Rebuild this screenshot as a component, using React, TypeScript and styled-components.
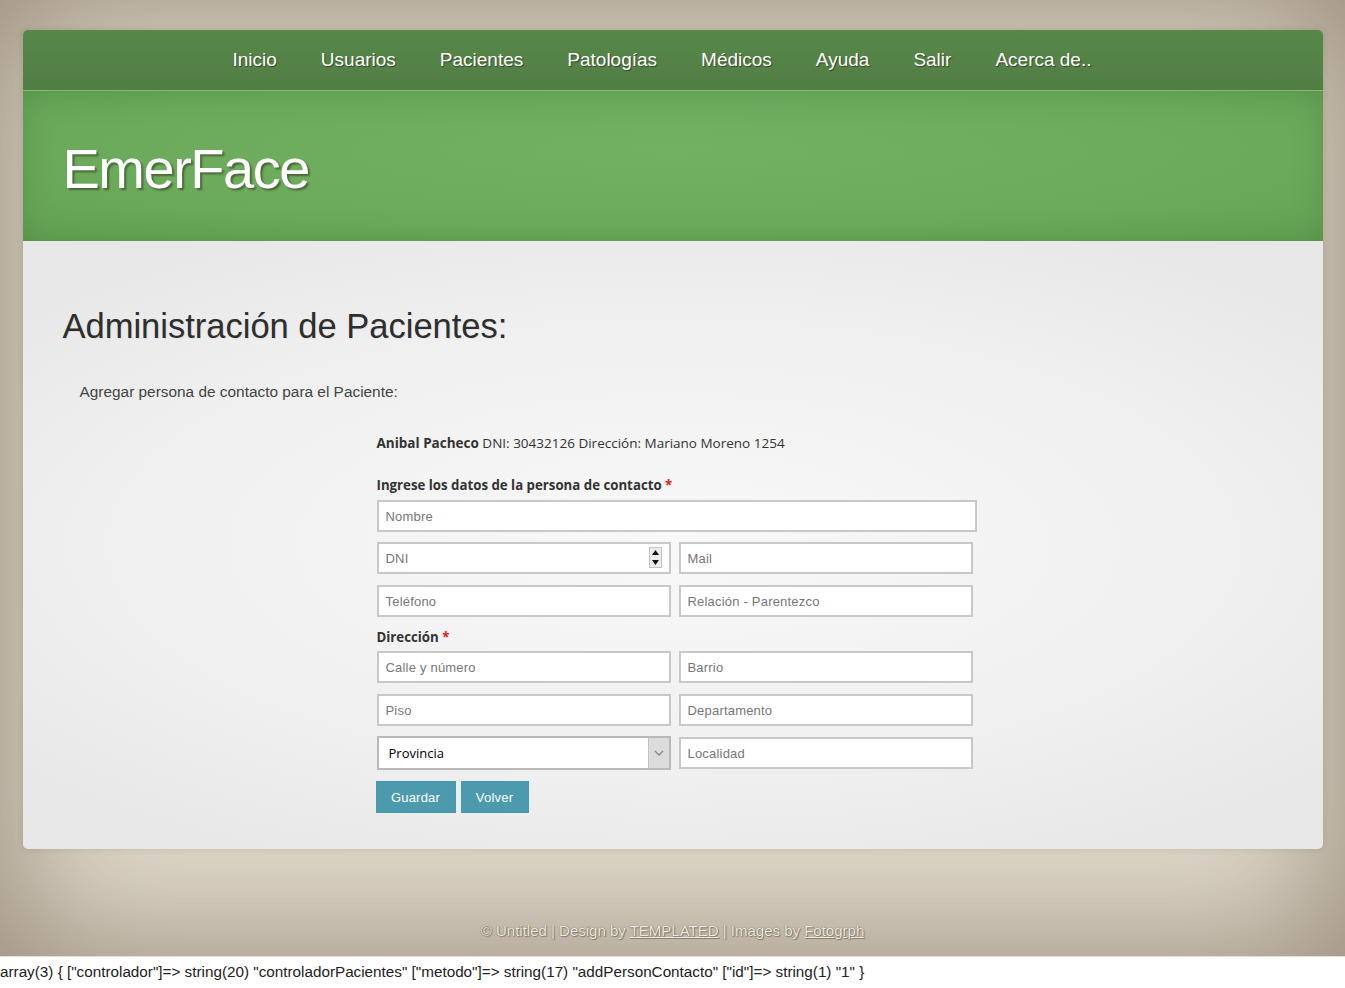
import React from "react";
import styled, { createGlobalStyle } from "styled-components";

const GlobalStyle = createGlobalStyle`
  html, body { margin: 0; padding: 0; background: #ffffff; }
  body { font-family: "Liberation Sans", Arial, sans-serif; }
  * { box-sizing: border-box; }
`;

const Page = styled.div`
  height: 957px;
  padding-top: 30px;
  background: #e0d9cb;
  box-shadow: inset 0 0 140px 10px rgba(95, 78, 58, 0.55);
  border-bottom: 1px solid #e4ded4;
`;

const Wrapper = styled.div`
  width: 1300px;
  margin: 0 auto;
  border-radius: 5px;
  box-shadow: 0 0 6px rgba(60, 45, 30, 0.15);
`;

const Nav = styled.nav`
  height: 60px;
  border-radius: 5px 5px 0 0;
  background: linear-gradient(#578848, #527d45);
  display: flex;
  justify-content: center;
  padding-right: 21px;
`;

const NavList = styled.ul`
  list-style: none;
  margin: 0;
  padding: 0;
  display: flex;
  gap: 44px;
`;

const NavLink = styled.a`
  display: block;
  font-family: "Liberation Sans", Arial, sans-serif;
  font-size: 19px;
  line-height: 60px;
  color: #ffffff;
  text-decoration: none;
  text-shadow: 1px 1px 1px rgba(0, 0, 0, 0.45);
`;

const Header = styled.header`
  height: 151px;
  border-top: 1px solid #80bd6f;
  background: radial-gradient(ellipse at 50% 40%, #72b062 0%, #6dab5c 60%, #64a253 100%);
  box-shadow: inset 0 0 30px rgba(45, 90, 35, 0.25);
  padding: 6px 40px 0;
`;

const Logo = styled.h1`
  margin: 0;
  font-family: "Liberation Sans", Arial, sans-serif;
  font-weight: normal;
  font-size: 56px;
  letter-spacing: -1.5px;
  line-height: 144px;
  color: #ffffff;
  text-shadow: 2px 2px 2px rgba(40, 50, 20, 0.55);
`;

const Content = styled.main`
  height: 608px;
  border-radius: 0 0 5px 5px;
  background: radial-gradient(ellipse 70% 60% at 50% 50%, #f8f8f8 0%, #f0f0f0 60%, #e7e7e7 100%);
  padding: 65px 40px 0;
`;

const Title = styled.h2`
  margin: 0;
  font-family: "Liberation Sans", Arial, sans-serif;
  font-weight: normal;
  font-size: 34.5px;
  line-height: 40px;
  color: #2e2e2e;
  text-shadow: 1px 1px 0 rgba(0, 0, 0, 0.08);
`;

const Intro = styled.p`
  margin: 36px 0 0 17px;
  font-family: "Liberation Sans", Arial, sans-serif;
  font-size: 15.4px;
  line-height: 20px;
  color: #444444;
`;

const Form = styled.form`
  width: 600px;
  margin: 32px 0 0 314px;
  display: flex;
  flex-direction: column;
  font-family: "Open Sans", "Noto Sans", sans-serif;
  font-size: 13px;
  color: #333333;
`;

const Info = styled.div`
  font-size: 13.5px;
  line-height: 18px;
  strong { font-weight: 700; }
`;

const Label = styled.div<{ $top: number; $bottom: number }>`
  margin-top: ${(p) => p.$top}px;
  margin-bottom: ${(p) => p.$bottom}px;
  font-size: 13.25px;
  line-height: 18px;
  font-weight: 700;
  color: #333333;
`;

const Star = styled.span`
  color: #e11b1b;
`;

const Row = styled.div<{ $gap?: number }>`
  display: grid;
  grid-template-columns: 294px 294px;
  column-gap: 8px;
  align-items: center;
  margin-bottom: ${(p) => p.$gap ?? 10}px;
`;

const Field = styled.div`
  position: relative;
`;

const Input = styled.input<{ $wide?: boolean }>`
  display: block;
  width: ${(p) => (p.$wide ? "600px" : "100%")};
  height: 32px;
  border: 2px solid #c8c8c8;
  background: #ffffff;
  padding: 0 7px;
  font-family: "Liberation Sans", Arial, sans-serif;
  font-size: 13px;
  letter-spacing: 0.2px;
  color: #555555;
  outline: none;
  &::placeholder { color: #777777; }
`;

const Spinner = styled.div`
  position: absolute;
  right: 9px;
  top: 5px;
  width: 13px;
  height: 21px;
  border: 1px solid #c4c4c4;
  background: #ececec;
  display: flex;
  flex-direction: column;
  align-items: center;
  justify-content: space-around;
`;

const Select = styled.select`
  display: block;
  width: 100%;
  height: 34px;
  border: 2px solid #b9b9b9;
  background: #ffffff;
  padding: 0 0 0 10px;
  appearance: none;
  font-family: "Open Sans", "Noto Sans", sans-serif;
  font-size: 13px;
  color: #000000;
  outline: none;
`;

const SelectArrow = styled.div`
  position: absolute;
  right: 2px;
  top: 2px;
  bottom: 2px;
  width: 21px;
  background: #dcdcdc;
  border-left: 1px solid #c4c4c4;
  display: flex;
  align-items: center;
  justify-content: center;
  pointer-events: none;
`;

const Buttons = styled.div`
  display: flex;
  gap: 5px;
  margin-left: -1px;
`;

const Button = styled.button<{ $w: number }>`
  width: ${(p) => p.$w}px;
  height: 32px;
  border: 1px solid #4a98ad;
  background: #4b9aae;
  color: #ffffff;
  font-family: "Liberation Sans", Arial, sans-serif;
  font-size: 13px;
  letter-spacing: 0.2px;
  padding: 0;
  cursor: pointer;
`;

const Footer = styled.footer`
  margin-top: 72px;
  text-align: center;
  font-family: "Liberation Sans", Arial, sans-serif;
  font-size: 15px;
  line-height: 20px;
  color: #eeeae3;
  text-shadow: 0 0 1px rgba(80, 65, 45, 0.9), 1px 1px 1px rgba(90, 75, 55, 0.5);
  a { color: #eeeae3; text-decoration: underline; }
`;

const Debug = styled.div`
  margin-top: 5px;
  font-family: "Liberation Sans", Arial, sans-serif;
  font-size: 15.25px;
  line-height: 20px;
  color: #222222;
  white-space: nowrap;
`;

const navItems = ["Inicio", "Usuarios", "Pacientes", "Patologías", "Médicos", "Ayuda", "Salir", "Acerca de.."];

export default function App() {
  return (
    <>
      <GlobalStyle />
      <Page>
        <Wrapper>
          <Nav>
            <NavList>
              {navItems.map((n) => (
                <li key={n}>
                  <NavLink href="#">{n}</NavLink>
                </li>
              ))}
            </NavList>
          </Nav>
          <Header>
            <Logo>EmerFace</Logo>
          </Header>
          <Content>
            <Title>Administración de Pacientes:</Title>
            <Intro>Agregar persona de contacto para el Paciente:</Intro>
            <Form onSubmit={(e) => e.preventDefault()}>
              <Info>
                <strong>Anibal Pacheco</strong> DNI: 30432126 Dirección: Mariano Moreno 1254
              </Info>
              <Label $top={24} $bottom={6}>
                Ingrese los datos de la persona de contacto <Star>*</Star>
              </Label>
              <Row $gap={10}>
                <Input $wide placeholder="Nombre" />
              </Row>
              <Row $gap={11}>
                <Field>
                  <Input placeholder="DNI" />
                  <Spinner>
                    <svg width="7" height="5" viewBox="0 0 7 5">
                      <polygon points="3.5,0 7,5 0,5" fill="#111" />
                    </svg>
                    <svg width="7" height="5" viewBox="0 0 7 5">
                      <polygon points="0,0 7,0 3.5,5" fill="#111" />
                    </svg>
                  </Spinner>
                </Field>
                <Input placeholder="Mail" />
              </Row>
              <Row $gap={0}>
                <Input placeholder="Teléfono" />
                <Input placeholder="Relación - Parentezco" />
              </Row>
              <Label $top={11} $bottom={5}>
                Dirección <Star>*</Star>
              </Label>
              <Row $gap={11}>
                <Input placeholder="Calle y número" />
                <Input placeholder="Barrio" />
              </Row>
              <Row $gap={10}>
                <Input placeholder="Piso" />
                <Input placeholder="Departamento" />
              </Row>
              <Row $gap={11}>
                <Field>
                  <Select defaultValue="">
                    <option value="">Provincia</option>
                  </Select>
                  <SelectArrow>
                    <svg width="10" height="6" viewBox="0 0 10 6">
                      <polyline points="1,1 5,5 9,1" fill="none" stroke="#888" strokeWidth="1.3" />
                    </svg>
                  </SelectArrow>
                </Field>
                <Input placeholder="Localidad" />
              </Row>
              <Buttons>
                <Button $w={80} type="submit">Guardar</Button>
                <Button $w={68} type="button">Volver</Button>
              </Buttons>
            </Form>
          </Content>
        </Wrapper>
        <Footer>
          © Untitled | Design by <a href="#">TEMPLATED</a> | Images by <a href="#">Fotogrph</a>
        </Footer>
      </Page>
      <Debug>
        array(3) {"{"} ["controlador"]=&gt; string(20) "controladorPacientes" ["metodo"]=&gt; string(17) "addPersonContacto" ["id"]=&gt; string(1) "1" {"}"}
      </Debug>
    </>
  );
}
